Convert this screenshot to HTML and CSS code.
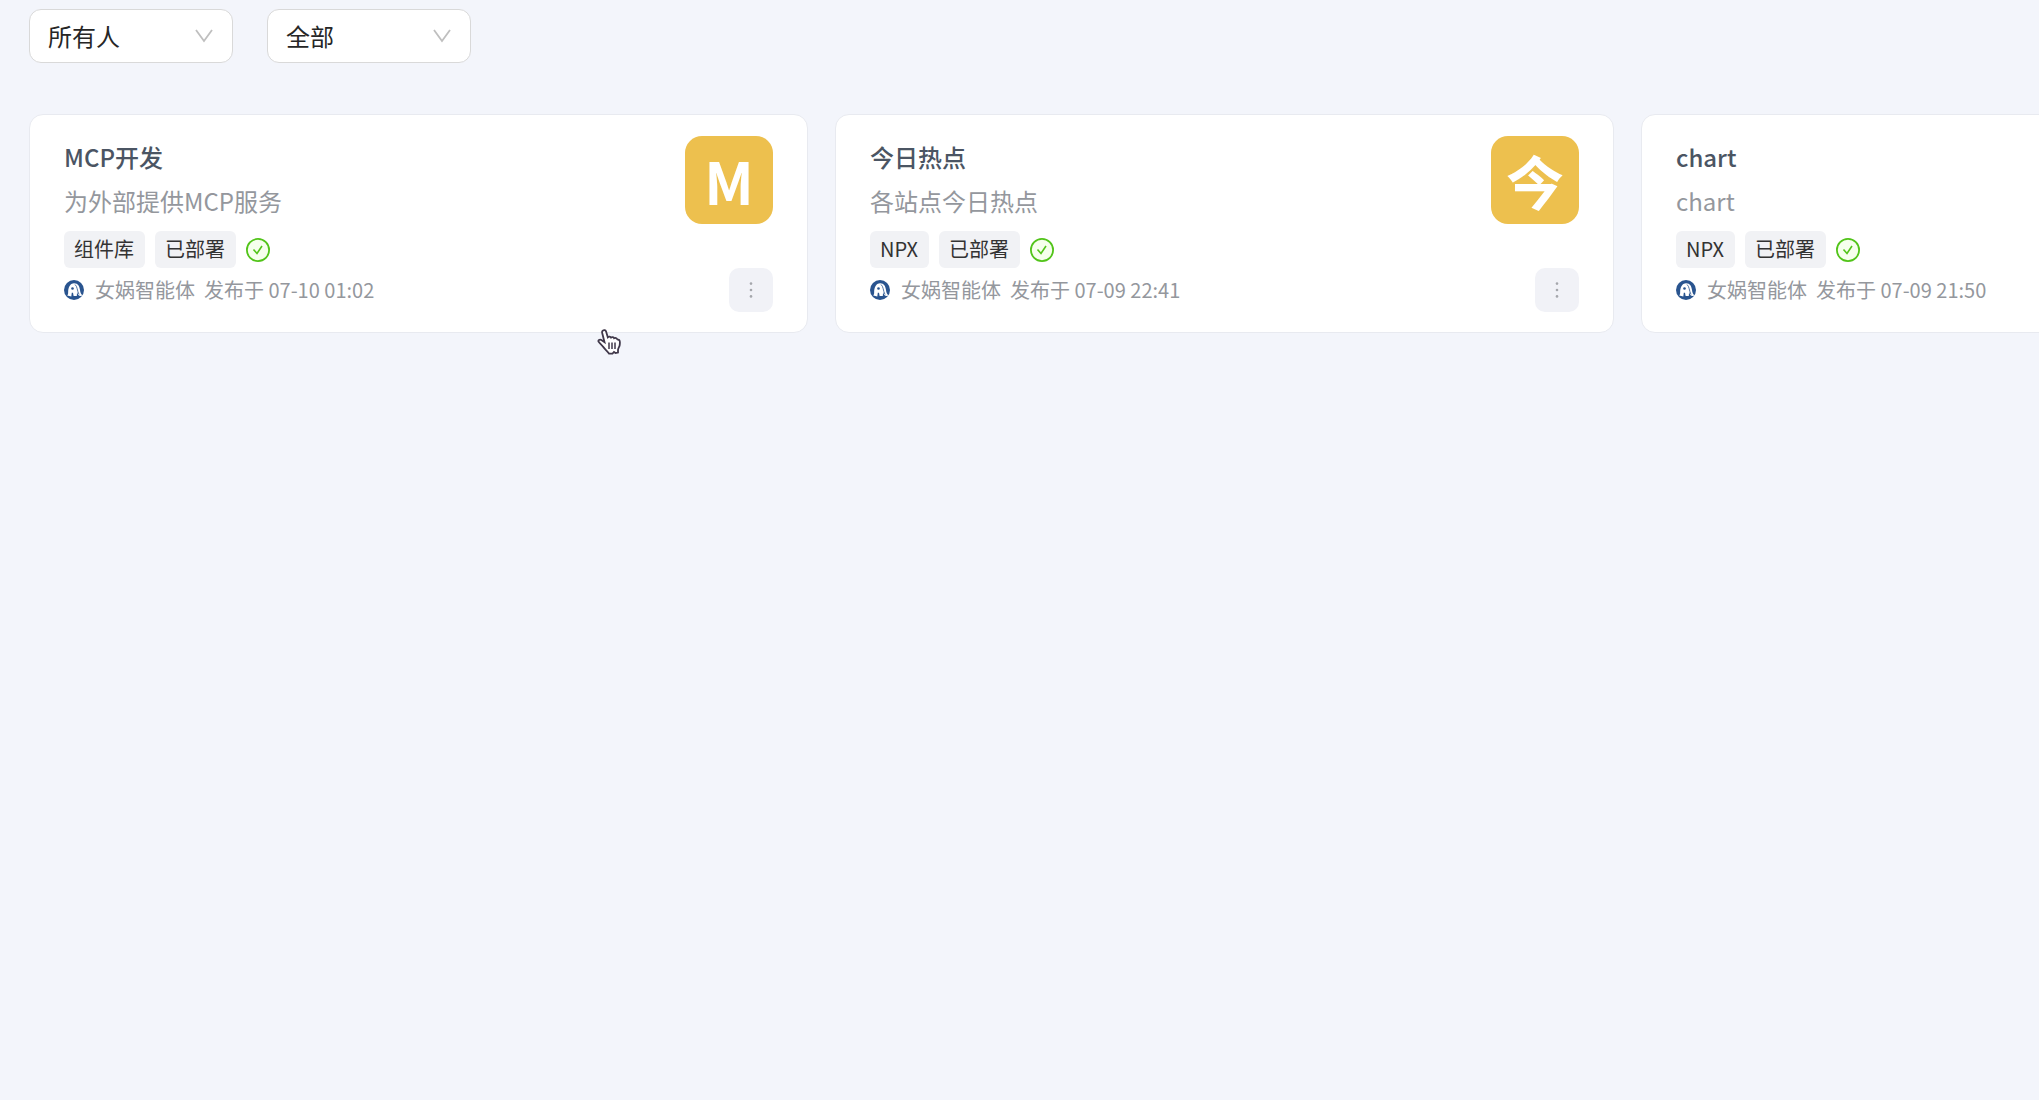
FILE: index.html
```html
<!DOCTYPE html>
<html lang="zh-CN">
<head>
    <meta charset="UTF-8">
    <title>MCP</title>
    <link rel="stylesheet" href="styles.css">
</head>
<body>

<!-- Shared icons -->
<svg class="sprite" aria-hidden="true">
    <symbol id="icon-check" viewBox="0 0 24 24">
        <circle cx="12" cy="12" r="11.100" fill="#f6ffed" stroke="#52c41a" stroke-width="1.800"/>
        <path d="M7.500 11.500l3.500 4 5-7.500" fill="none" stroke="#52c41a" stroke-width="1.600"/>
    </symbol>
    <symbol id="icon-logo" viewBox="0 0 20 20">
        <circle cx="10" cy="10" r="10" fill="#29548f"/>
        <path d="M3.200 15.500c1.300-1 .8-3 1-5C4.700 6 7 3.200 10 3.200c4.200 0 5.500 3.300 6 6.800.3 2.500 1 4.500 2.600 5.300-1.300 1.200-3.300 1-4.200-.2-.6-.8-1-1.800-1.300-3l-.3 4H9.600L9 12.800H7.800L7.300 16.500z" fill="#fff"/>
        <path d="M11 4.500c2.500 2 2 6 4 10" fill="none" stroke="#29548f" stroke-width=".8"/>
        <circle cx="8.500" cy="8.500" r="1.300" fill="#29548f"/>
    </symbol>
    <symbol id="icon-more" viewBox="0 0 20 20">
        <circle cx="10" cy="3.600" r="1.300"/>
        <circle cx="10" cy="10" r="1.300"/>
        <circle cx="10" cy="16.400" r="1.300"/>
    </symbol>
    <symbol id="icon-arrow" viewBox="0 0 18 14">
        <path d="M1 1l8 11 8-11" fill="none" stroke="#bfbfbf" stroke-width="1.800"/>
    </symbol>
</svg>

<!-- Filters -->
<form class="filters">
    <div class="select-box">
        <select aria-label="创建者">
            <option>所有人</option>
        </select>
        <svg class="arrow"><use href="#icon-arrow"/></svg>
    </div>
    <div class="select-box">
        <select aria-label="状态">
            <option>全部</option>
        </select>
        <svg class="arrow"><use href="#icon-arrow"/></svg>
    </div>
</form>

<!-- Service cards -->
<main class="card-list">
    <article class="card">
        <div class="card-info">
            <h2>MCP开发</h2>
            <p class="desc">为外部提供MCP服务</p>
            <div class="tags">
                <span class="tag">组件库</span>
                <span class="tag">已部署</span>
                <svg class="check"><use href="#icon-check"/></svg>
            </div>
            <div class="meta">
                <svg class="logo"><use href="#icon-logo"/></svg>
                <span>女娲智能体</span>
                <span class="time">发布于 07-10 01:02</span>
            </div>
        </div>
        <div class="card-side">
            <div class="avatar">M</div>
            <button type="button" class="more" aria-label="更多"><svg><use href="#icon-more"/></svg></button>
        </div>
    </article>

    <article class="card">
        <div class="card-info">
            <h2>今日热点</h2>
            <p class="desc">各站点今日热点</p>
            <div class="tags">
                <span class="tag">NPX</span>
                <span class="tag">已部署</span>
                <svg class="check"><use href="#icon-check"/></svg>
            </div>
            <div class="meta">
                <svg class="logo"><use href="#icon-logo"/></svg>
                <span>女娲智能体</span>
                <span class="time">发布于 07-09 22:41</span>
            </div>
        </div>
        <div class="card-side">
            <div class="avatar">今</div>
            <button type="button" class="more" aria-label="更多"><svg><use href="#icon-more"/></svg></button>
        </div>
    </article>

    <article class="card">
        <div class="card-info">
            <h2>chart</h2>
            <p class="desc">chart</p>
            <div class="tags">
                <span class="tag">NPX</span>
                <span class="tag">已部署</span>
                <svg class="check"><use href="#icon-check"/></svg>
            </div>
            <div class="meta">
                <svg class="logo"><use href="#icon-logo"/></svg>
                <span>女娲智能体</span>
                <span class="time">发布于 07-09 21:50</span>
            </div>
        </div>
    </article>
</main>

<!-- Mouse pointer -->
<svg class="pointer" viewBox="0 0 24 26" aria-hidden="true">
    <path d="M6 1.500c1-.8 2.500-.4 3 .8l1.800 6c1-1 2.700-.9 3.300.3 1-.8 2.500-.5 3 .6 1.200-.6 2.700-.2 3.200 1.100l2 .8c1 1 .6 3 .4 5-.3 2-1.700 3-1.700 5v2.500l-2.500.4-1.500-1-1.500 1.600H12c-2-3-4.500-4.500-6.500-7.500-1-1.600-3-3-4-4.600-.5-1.200 1-2.300 2.500-1.700l3.500 2.400L5.200 4c-.3-1 0-2 .8-2.500z" fill="#fff" stroke="#40384a" stroke-width="1.800"/>
    <path d="M12 13.500v6.500M15 13.500v6.500M18 13.500v6.500" fill="none" stroke="#40384a" stroke-width="1.500"/>
</svg>

</body>
</html>
```

FILE: styles.css
```css
* {
    box-sizing: border-box;
}
body {
    font-family: "Noto Sans CJK SC", sans-serif;
    font-size: 20px;
    margin: 0;
    padding: 9px 0 0 29px;
    background-color: #f3f5fb;
    overflow: hidden;
}
.sprite {
    display: none;
}
.filters {
    display: flex;
    gap: 34px;
    margin-bottom: 51px;
}
.select-box {
    position: relative;
    width: 204px;
}
.select-box select {
    appearance: none;
    width: 100%;
    height: 54px;
    padding: 0 18px 2px;
    border: 1px solid #d9d9d9;
    border-radius: 12px;
    background-color: #ffffff;
    color: #262626;
    font-family: inherit;
    font-size: 24px;
}
.arrow {
    position: absolute;
    right: 20px;
    top: 20px;
    width: 18px;
    height: 14px;
    pointer-events: none;
}
.card-list {
    display: grid;
    grid-template-columns: repeat(3, minmax(779px, 1fr));
    gap: 27px;
}
.card {
    display: flex;
    justify-content: space-between;
    padding: 21px 34px 20px;
    border: 1px solid #e8eaf0;
    border-radius: 14px;
    background-color: #ffffff;
}
.card h2 {
    margin: 0;
    color: #4b5563;
    font-size: 24px;
    font-weight: 500;
    line-height: 42px;
}
.desc {
    margin: 0 0 7px;
    color: #94979d;
    font-size: 24px;
    line-height: 46px;
}
.tags {
    display: flex;
    align-items: center;
    gap: 10px;
}
.tag {
    padding: 0 11px 2px 10px;
    border-radius: 6px;
    background-color: #f1f2f5;
    color: #333333;
    line-height: 35px;
}
.check {
    width: 24px;
    height: 24px;
}
.meta {
    display: flex;
    align-items: center;
    color: #94979d;
    line-height: 44px;
}
.logo {
    width: 20px;
    height: 20px;
    margin-right: 11px;
}
.time {
    margin-left: 9px;
}
.card-side {
    display: flex;
    flex-direction: column;
    justify-content: space-between;
    align-items: flex-end;
}
.avatar {
    width: 88px;
    border-radius: 17px;
    background-color: #edc04e;
    color: #ffffff;
    font-size: 58px;
    font-weight: 700;
    line-height: 88px;
    text-align: center;
}
.more {
    display: flex;
    align-items: center;
    justify-content: center;
    width: 44px;
    height: 44px;
    padding: 0;
    border: none;
    border-radius: 10px;
    background-color: #f1f2f7;
    cursor: pointer;
}
.more svg {
    width: 20px;
    height: 20px;
    fill: #a5a7ac;
}
.pointer {
    position: absolute;
    left: 597px;
    top: 329px;
    width: 24px;
    height: 26px;
}
```
